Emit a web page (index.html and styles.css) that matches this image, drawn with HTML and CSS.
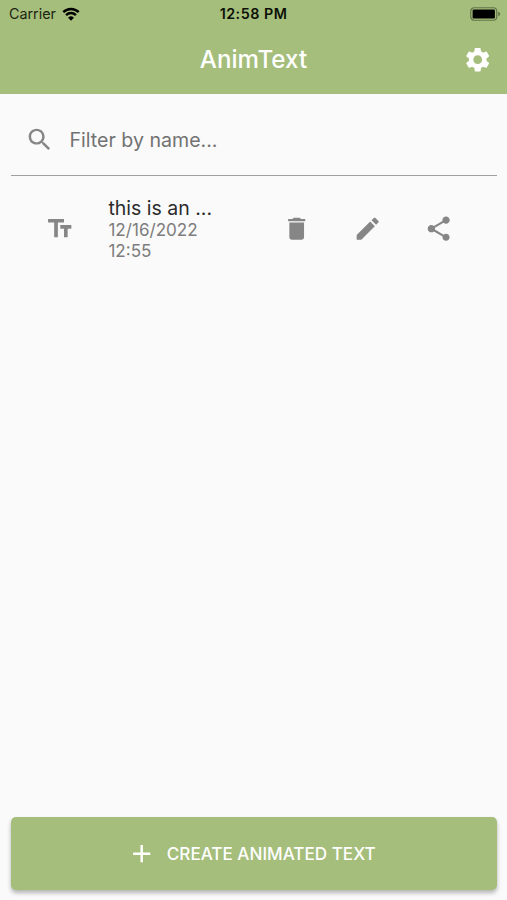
FILE: index.html
```html
<!DOCTYPE html>
<html lang="en">
<head>
    <meta charset="UTF-8">
    <meta name="viewport" content="width=device-width, initial-scale=1.0">
    <title>AnimText</title>
    <link rel="stylesheet" href="styles.css">
</head>
<body>
<div class="app">
  <header class="header">
    <!-- Phone status bar -->
    <div class="status_bar">
      <div class="carrier">
        <span class="carrier_name">Carrier</span>
        <svg class="wifi" viewBox="0 0 18 14">
          <path d="M1.3 5.1a11 11 0 0 1 15.4 0M4.1 8.1a7 7 0 0 1 9.8 0" fill="none" stroke="#000" stroke-width="2.5"/>
          <path d="M9 13.7l-2.9-3a4.2 4.2 0 0 1 5.8 0z"/>
        </svg>
      </div>
      <span class="time">12:58 PM</span>
      <svg class="battery" viewBox="0 0 31 14">
        <rect x="0.75" y="0.75" width="26" height="12.5" rx="3.5" fill="none" stroke="#000" stroke-opacity="0.4" stroke-width="1.2"/>
        <rect x="2.6" y="2.6" width="22.3" height="8.8" rx="1.2"/>
        <path d="M28.2 4.8c1.3.4 2 1.2 2 2.2s-.7 1.8-2 2.2z" fill-opacity="0.4"/>
      </svg>
    </div>
    <div class="toolbar">
      <h1>AnimText</h1>
      <svg class="icon settings" viewBox="0 0 24 24"><path d="M19.14 12.94c.04-.3.06-.61.06-.94 0-.32-.02-.64-.07-.94l2.03-1.58c.18-.14.23-.41.12-.61l-1.92-3.32c-.12-.22-.37-.29-.59-.22l-2.39.96c-.5-.38-1.03-.7-1.62-.94l-.36-2.54c-.04-.24-.24-.41-.48-.41h-3.84c-.24 0-.43.17-.47.41l-.36 2.54c-.59.24-1.13.57-1.62.94l-2.39-.96c-.22-.08-.47 0-.59.22L2.74 8.87c-.12.21-.08.47.12.61l2.03 1.58c-.05.3-.09.63-.09.94s.02.64.07.94l-2.03 1.58c-.18.14-.23.41-.12.61l1.92 3.32c.12.22.37.29.59.22l2.39-.96c.5.38 1.03.7 1.62.94l.36 2.54c.05.24.24.41.48.41h3.84c.24 0 .44-.17.47-.41l.36-2.54c.59-.24 1.13-.56 1.62-.94l2.39.96c.22.08.47 0 .59-.22l1.92-3.32c.12-.22.07-.47-.12-.61l-2.01-1.58zM12 15.6c-1.98 0-3.6-1.62-3.6-3.6s1.62-3.6 3.6-3.6 3.6 1.62 3.6 3.6-1.62 3.6-3.6 3.6z"/></svg>
    </div>
  </header>

  <!-- Search field -->
  <div class="filter">
    <svg class="icon" viewBox="0 0 24 24"><path d="M15.5 14h-.79l-.28-.27C15.41 12.59 16 11.11 16 9.5 16 5.91 13.09 3 9.5 3S3 5.91 3 9.5 5.91 16 9.5 16c1.61 0 3.09-.59 4.23-1.57l.27.28v.79l5 4.99L20.49 19l-4.99-5zm-6 0C7.01 14 5 11.99 5 9.5S7.01 5 9.5 5 14 7.01 14 9.5 11.99 14 9.5 14z"/></svg>
    <input class="filter_input" type="text" placeholder="Filter by name...">
  </div>

  <!-- Saved texts -->
  <main class="list">
    <div class="item">
      <svg class="icon" viewBox="0 0 24 24"><path d="M2.5 4v3h5v12h3V7h5V4h-13zm19 5h-9v3h3v7h3v-7h3V9z"/></svg>
      <div class="item_text">
        <div class="item_name">this is an ...</div>
        <div class="item_date">12/16/2022 12:55</div>
      </div>
      <div class="actions">
        <svg class="icon" viewBox="0 0 24 24"><path d="M6 19c0 1.1.9 2 2 2h8c1.1 0 2-.9 2-2V7H6v12zM19 4h-3.5l-1-1h-5l-1 1H5v2h14V4z"/></svg>
        <svg class="icon" viewBox="0 0 24 24"><path d="M3 17.25V21h3.75L17.81 9.94l-3.75-3.75L3 17.25zM20.71 7.04c.39-.39.39-1.02 0-1.41l-2.34-2.34c-.39-.39-1.02-.39-1.41 0l-1.83 1.83 3.75 3.75 1.83-1.83z"/></svg>
        <svg class="icon" viewBox="0 0 24 24"><path d="M18 16.08c-.76 0-1.44.3-1.96.77L8.91 12.7c.05-.23.09-.46.09-.7s-.04-.47-.09-.7l7.05-4.11c.54.5 1.25.81 2.04.81 1.66 0 3-1.34 3-3s-1.34-3-3-3-3 1.34-3 3c0 .24.04.47.09.7L8.04 9.81C7.5 9.31 6.79 9 6 9c-1.66 0-3 1.34-3 3s1.34 3 3 3c.79 0 1.5-.31 2.04-.81l7.12 4.16c-.05.21-.08.43-.08.65 0 1.61 1.31 2.92 2.92 2.92 1.61 0 2.92-1.31 2.92-2.92s-1.31-2.92-2.92-2.92z"/></svg>
      </div>
    </div>
  </main>

  <button class="create">
    <svg class="plus" viewBox="0 0 24 24"><path d="M19 13h-6v6h-2v-6H5v-2h6V5h2v6h6v2z"/></svg>
    <span>CREATE ANIMATED TEXT</span>
  </button>
</div>
</body>
</html>
```

FILE: styles.css
```css
*, *::before, *::after {
    box-sizing: border-box;
}

body {
    margin: 0;
    background-color: #fafafa;
    font-family: Inter, "Liberation Sans", sans-serif;
}

.app {
    display: flex;
    flex-direction: column;
    height: 100vh;
}

/* Green header with the status bar on top */
.header {
    height: 94px;
    background-color: #a5be7b;
}

.status_bar {
    display: grid;
    grid-template-columns: 1fr auto 1fr;
    align-items: center;
    height: 27px;
    padding: 0 6px 0 9px;
    font-size: 14.3px;
}

.carrier {
    display: flex;
    align-items: center;
    gap: 6px;
    margin-right: 3px;
    color: #1c2412;
}

.wifi {
    width: 18px;
    height: 14px;
}

.time {
    margin-left: -3px;
    font-weight: 600;
    letter-spacing: 0.5px;
    color: #0c1006;
}

.battery {
    width: 31px;
    height: 14px;
    justify-self: end;
}

.toolbar {
    display: grid;
    grid-template-columns: 1fr auto 1fr;
    align-items: center;
    height: 65px;
    padding: 0 15px;
}

h1 {
    grid-column: 2;
    margin: 0;
    font-size: 24.2px;
    font-weight: 500;
    color: #fff;
}

.icon {
    flex: none;
    width: 29.4px;
    height: 29.4px;
    fill: #868686;
}

.settings {
    justify-self: end;
    fill: #fff;
}

/* Search field with underline */
.filter {
    display: flex;
    align-items: center;
    gap: 15px;
    height: 82px;
    margin: 0 10px 0 11px;
    padding: 10px 0 0 14px;
    border-bottom: 1px solid #a0a0a0;
}

.filter_input {
    flex: 1;
    min-width: 0;
    padding: 0;
    border: none;
    outline: none;
    background: none;
    font-family: inherit;
    font-size: 19.6px;
}

.filter_input::placeholder {
    color: #727272;
}

.list {
    flex: 1;
}

.item {
    display: flex;
    align-items: center;
    height: 106px;
    padding: 0 54px 0 45px;
}

.item_text {
    width: 110px;
    margin-left: 34px;
}

.item_name {
    font-size: 19.5px;
    line-height: 22px;
    color: #2b2b2b;
    white-space: nowrap;
}

.item_date {
    font-size: 17.1px;
    line-height: 21px;
    color: #7d7d7d;
}

.actions {
    display: flex;
    gap: 41.5px;
    margin-left: auto;
}

/* Bottom button */
.create {
    display: flex;
    align-items: center;
    justify-content: center;
    gap: 10px;
    height: 73px;
    margin: 0 10px 10px 11px;
    padding: 0 5px 0 0;
    border: none;
    border-radius: 5px;
    background-color: #a5be7b;
    box-shadow: 0 3px 4px rgba(0, 0, 0, 0.28);
    font-family: inherit;
    font-size: 17.1px;
    font-weight: 500;
    color: #fff;
}

.plus {
    width: 29.4px;
    height: 29.4px;
    fill: #fff;
}
```
